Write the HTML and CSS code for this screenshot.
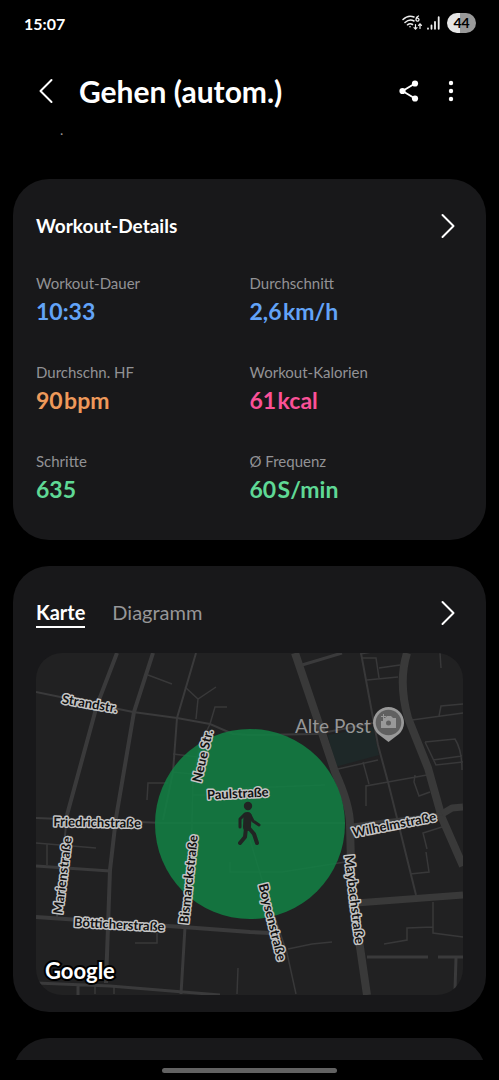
FILE: index.html
```html
<!DOCTYPE html>
<html lang="de">
  <head>
    <meta charset="UTF-8" />
    <meta name="viewport" content="width=device-width, initial-scale=1.0" />
    <title>Gehen (autom.)</title>
    <link rel="stylesheet" href="styles.css">
  </head>
  <body>
    <div class="status">
      <span class="time">15:07</span>
      <div class="status-icons">
        <svg width="21" height="16" viewBox="0 0 21 16" fill="none" stroke="#eee" stroke-width="1.5" stroke-linecap="round">
          <path d="M1 4.5Q6 -.5 12 2M3 7.5Q7.5 3.500 12 6M5.5 9.8Q8 8 10.5 9.5" />
          <circle cx="8" cy="11.8" r=".8" fill="#eee" stroke="none" />
          <path d="M16.5 1Q14 2 14 4.5A1.500 1.500 0 1 0 15.5 3.2" stroke-width="1.3" />
          <path d="M13.5 9.5V14M12 12.7L13.5 14.2L15 12.7M18 13.5V9M16.5 10.3L18 8.8L19.5 10.3" stroke-width="1.2" />
        </svg>
        <svg width="13" height="14" viewBox="0 0 13 14" stroke="#eee" stroke-width="1.8" stroke-linecap="round">
          <path d="M1 12.5V12.8M4.5 9.5V12.8M8 6V12.8M11.7 1.2V12.8" />
        </svg>
        <span class="battery">44</span>
      </div>
    </div>

    <header class="header">
      <button class="icon-btn back" aria-label="Zurück">
        <svg width="14" height="26" viewBox="0 0 14 26"><path d="M12.5 2L1.5 13L12.5 24" /></svg>
      </button>
      <h1>Gehen (autom.)</h1>
      <button class="icon-btn" aria-label="Teilen">
        <svg width="20" height="22" viewBox="0 0 20 22">
          <path d="M16 3.5L3.5 11L16 18.5" />
          <g class="dots"><circle cx="16" cy="3.5" r="3.1" /><circle cx="3.5" cy="11" r="3.1" /><circle cx="16" cy="18.5" r="3.1" /></g>
        </svg>
      </button>
      <button class="icon-btn more" aria-label="Mehr">
        <svg width="6" height="22" viewBox="0 0 6 22">
          <g class="dots"><circle cx="3" cy="3" r="2.2" /><circle cx="3" cy="11" r="2.2" /><circle cx="3" cy="19" r="2.2" /></g>
        </svg>
      </button>
    </header>
    <p class="subline">.</p>

    <main>
      <section class="card details">
        <div class="card-head">
          <h2>Workout-Details</h2>
          <button class="icon-btn" aria-label="Workout-Details öffnen">
            <svg width="14" height="26" viewBox="0 0 14 26"><path d="M1.5 2L12.5 13L1.5 24" /></svg>
          </button>
        </div>
        <dl class="stats">
          <div><dt>Workout-Dauer</dt><dd class="blue">10:33</dd></div>
          <div><dt>Durchschnitt</dt><dd class="blue">2,6&#8202;km/h</dd></div>
          <div><dt>Durchschn. HF</dt><dd class="orange">90&#8202;bpm</dd></div>
          <div><dt>Workout-Kalorien</dt><dd class="pink">61&#8202;kcal</dd></div>
          <div><dt>Schritte</dt><dd class="green">635</dd></div>
          <div><dt>Ø Frequenz</dt><dd class="green">60&#8202;S/min</dd></div>
        </dl>
      </section>

      <section class="card route">
        <div class="card-head">
          <div class="tabs">
            <button class="tab active">Karte</button>
            <button class="tab">Diagramm</button>
          </div>
          <button class="icon-btn" aria-label="Karte öffnen">
            <svg width="14" height="26" viewBox="0 0 14 26"><path d="M1.5 2L12.5 13L1.5 24" /></svg>
          </button>
        </div>
        <svg class="map" viewBox="36 653 427 342">
          <rect class="ground" x="36" y="653" width="427" height="342" />
          <path class="park" d="M328 735L373 727L379 755L335 767Z" />

          <!-- lanes -->
          <g class="lanes">
            <path d="M148 675L172 684M185 687L198 699L216 687M198 699L196 719M210 724L215 707H227" />
            <path d="M173 754L198 757M172 772L193 774M147 800L148 783H168M193 795H230" />
            <path d="M210 724L200 745L193 778L192 822L190 920" />
            <path d="M361 653L378 745L388 782L398 822L416 895" stroke-width="2" />
            <path d="M362 658L376 658L379 678M360 654L372 652M379 668L400 665M367 680L398 677" />
            <path d="M440 653L441 668M463 704L441 706L439 716M412 720L463 713" />
            <path d="M425 742L455 739Q462 750 462 770M425 742L436 765L463 762M433 760L462 756" />
            <path d="M338 769L378 760M363 762L369 784M366 806V786L388 782L427 775M415 775L414 782L419 796L430 792" />
            <path d="M245 788L325 785M36 843L96 848M47 844V865M157 933V943H135M95 983V994M114 986V994M238 968L237 994" />
            <path d="M230 862V872H282L345 862M288 949L312 944L332 942M250 840L263 883L287 953L296 994" />
            <path d="M410 874L429 872L426 852M427 849L423 833L442 827M433 902V933L463 937M433 927L407 928V940L384 944" />
          </g>

          <!-- streets -->
          <g class="streets">
            <path d="M36 692L133 712L177 718L210 724L233 734L250 735L317 734L373 723" stroke-width="2" />
            <path d="M196 653L177 718L173 772L163 820" stroke-width="2" />
            <path d="M117 653L97 705L67 815M153 653L134 712L116 818L110 870L106 983" stroke-width="4" />
            <path d="M67 815L57 917M36 818L163 823H345" stroke-width="2" />
            <path d="M36 866L110 871M302 665L342 653M185 927L181 994M36 983L110 986L220 995M78 986V995M367 957H428M438 957H463M456 958L455 990" stroke-width="3" />
            <path d="M36 917L183 927L250 932L270 933" stroke-width="4" />
          </g>
          <g class="roads">
            <path d="M295 653L317 718L335 772Q350 805 350 825L352 903L360 947L367 995" />
            <path d="M407 653Q398 682 408 718L428 768L442 818L463 866" />
            <path d="M356 903L463 895M442 814L452 808L463 807" stroke-width="7" />
            <path d="M352 825L442 814" stroke-width="3" />
          </g>

          <circle class="area" cx="250" cy="824" r="95" />

          <!-- walking figure -->
          <g class="walker">
            <circle cx="248" cy="806" r="4.2" />
            <path d="M248 827L254 834L257 843M246 828L245 837L240 843" stroke-width="4" />
            <path d="M245 814L240 819V827M250 815L253 821L259 825" stroke-width="3" />
            <path d="M247.500 816L247 827" stroke-width="8" />
          </g>

          <g class="streetnames">
            <text transform="translate(89 708) rotate(10)">Strandstr.</text>
            <text transform="translate(207 757) rotate(-77)">Neue Str.</text>
            <text transform="translate(238 798) rotate(-3)">Paulstraße</text>
            <text transform="translate(97 827) rotate(1)">Friedrichstraße</text>
            <text transform="translate(67 876) rotate(-83)">Marienstraße</text>
            <text transform="translate(193 880) rotate(-84)">Bismarckstraße</text>
            <text transform="translate(119 929) rotate(3)">Bötticherstraße</text>
            <text transform="translate(268 923) rotate(76)">Boysenstraße</text>
            <text transform="translate(350 900) rotate(83)">Maybachstraße</text>
            <text transform="translate(395 829) rotate(-11)">Wilhelmstraße</text>
          </g>

          <text class="poi" x="295" y="733">Alte Post</text>
          <g class="pin">
            <path d="M388.500 742L378 734A15.500 15.500 0 1 1 399 734Z" />
            <circle cx="388.500" cy="722.500" r="12.800" />
            <path class="camera" d="M383 718H385L387 716H391L393 718H396V728H381V721H383ZM381 716H383V714H384V716H386V717H384V719H383V717H381Z" />
            <circle cx="388.500" cy="723" r="2.500" />
          </g>
          <text class="brand" x="45" y="979">Google</text>
        </svg>
      </section>

      <section class="card next"></section>
    </main>

    <div class="navbar"><span class="handle"></span></div>
  </body>
</html>
```

FILE: styles.css
```css
* {
  box-sizing: border-box;
  margin: 0;
  padding: 0;
}

body {
  display: flex;
  flex-direction: column;
  height: 100vh;
  overflow: hidden;
  background-color: #000;
  color: #fff;
  font-family: Lato, "Open Sans", sans-serif;
}

button {
  border: none;
  background: none;
  color: inherit;
  font-family: inherit;
  cursor: pointer;
}

.status {
  display: flex;
  flex: none;
  justify-content: space-between;
  align-items: center;
  height: 46px;
  padding: 0 23px 0 24px;
}

.time {
  font-size: 16px;
  font-weight: bold;
}

.status-icons {
  display: flex;
  align-items: center;
  gap: 4px;
}

.battery {
  width: 29px;
  height: 20px;
  margin-left: 3px;
  border-radius: 10px;
  background: linear-gradient(to right, #e6e6e6 44%, #999 44%);
  color: #000;
  font-size: 14px;
  font-weight: bold;
  line-height: 20px;
  text-align: center;
}

.header {
  display: flex;
  flex: none;
  align-items: center;
  height: 90px;
  padding: 0 45px 0 39px;
}

.header h1 {
  flex: 1;
  margin-left: 26px;
  font-size: 30px;
  line-height: 36px;
}

.header .more {
  margin-left: 29px;
}

.icon-btn {
  display: flex;
}

.icon-btn svg {
  fill: none;
  stroke: #fff;
  stroke-width: 2;
  stroke-linecap: round;
  stroke-linejoin: round;
}

.icon-btn .dots {
  fill: #fff;
  stroke: none;
}

.subline {
  flex: none;
  height: 43px;
  margin-top: -18px;
  padding-left: 60px;
  color: #999;
  font-size: 14px;
  line-height: 24px;
}

main {
  flex: 1;
  min-height: 0;
  padding: 18px 13px 0;
  overflow: hidden;
}

.card {
  margin-bottom: 26px;
  padding: 24px 23px;
  border-radius: 36px;
  background-color: #18181a;
}

.card-head {
  display: flex;
  justify-content: space-between;
  align-items: center;
  height: 46px;
  padding-right: 8px;
}

.card-head h2 {
  font-size: 19px;
  line-height: 24px;
}

.stats {
  display: grid;
  grid-template-columns: 1fr 1fr;
  gap: 33px 0;
  padding: 24px 0 12px;
}

.stats dt {
  color: #929295;
  font-size: 15px;
  line-height: 20px;
}

.stats dd {
  font-size: 23px;
  font-weight: bold;
  line-height: 36px;
}

.blue {
  color: #62a3f7;
}

.orange {
  color: #ee995a;
}

.pink {
  color: #fb5197;
}

.green {
  color: #5fd895;
}

.tabs {
  display: flex;
  gap: 27px;
}

.tab {
  border-bottom: 2px solid transparent;
  color: #969698;
  font-size: 20px;
  line-height: 28px;
}

.tab.active {
  border-color: #fff;
  color: #fff;
  font-weight: bold;
}

.details {
  padding-bottom: 21px;
}

.route {
  padding-bottom: 17px;
}

.map {
  display: block;
  width: 100%;
  margin-top: 17px;
  border-radius: 26px;
}

.ground {
  fill: #212122;
}

.park {
  fill: #1e2828;
}

.lanes {
  fill: none;
  stroke: #383839;
  stroke-width: 1.5;
}

.streets {
  fill: none;
  stroke: #3a3a3b;
}

.roads {
  fill: none;
  stroke: #393939;
  stroke-width: 8;
  stroke-linejoin: round;
}

.area {
  fill: #128144;
  fill-opacity: 0.85;
}

.walker {
  fill: #212423;
}

.walker path {
  fill: none;
  stroke: #212423;
  stroke-linecap: round;
  stroke-linejoin: round;
}

.streetnames {
  fill: #111;
  stroke: #c4c4c4;
  stroke-width: 3;
  stroke-linejoin: round;
  paint-order: stroke;
  font-size: 13px;
  font-weight: bold;
  text-anchor: middle;
}

.poi {
  fill: #969696;
  font-size: 19px;
}

.pin {
  fill: #999;
}

.pin circle {
  fill: #606060;
}

.pin .camera {
  fill: #999;
}

.brand {
  fill: #fff;
  stroke: #000;
  stroke-width: 4;
  paint-order: stroke;
  font-size: 22px;
  font-weight: bold;
}

.next {
  height: 200px;
}

.navbar {
  display: flex;
  flex: none;
  justify-content: center;
  align-items: center;
  height: 20px;
}

.handle {
  width: 35%;
  height: 5px;
  border-radius: 3px;
  background-color: #626262;
}
```
